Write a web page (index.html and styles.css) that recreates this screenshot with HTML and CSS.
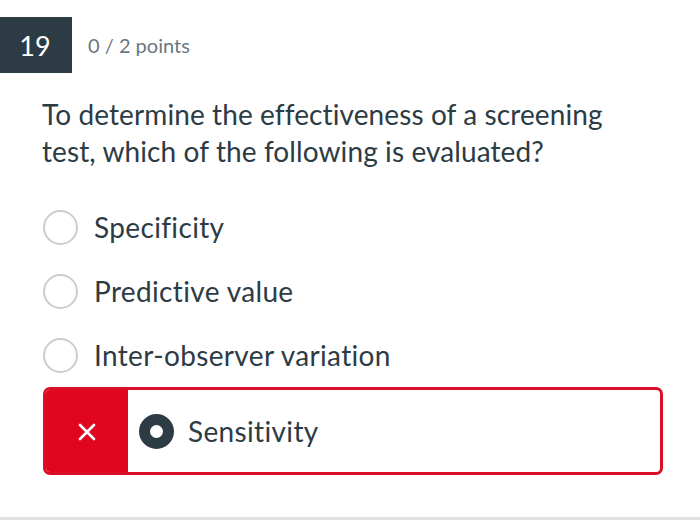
FILE: index.html
```html
<!DOCTYPE html>
<html>
<head>
<meta charset="utf-8">
<link rel="stylesheet" href="styles.css">
</head>
<body>
<div class="page">
  <header class="qhead">
    <div class="qnum">19</div>
    <div class="points">0 / 2 points</div>
  </header>
  <p class="question">To determine the effectiveness of a screening test, which of the following is evaluated?</p>
  <ul class="answers">
    <li class="answer"><span class="radio"></span><span class="label">Specificity</span></li>
    <li class="answer"><span class="radio"></span><span class="label">Predictive value</span></li>
    <li class="answer"><span class="radio"></span><span class="label">Inter-observer variation</span></li>
  </ul>
  <div class="wrong">
    <div class="mark">
      <svg width="20" height="20" viewBox="0 0 20 20"><path d="M3 3 L17 17 M17 3 L3 17" stroke="#fff" stroke-width="2.6" stroke-linecap="round"/></svg>
    </div>
    <div class="picked"><span class="radio selected"></span><span class="label">Sensitivity</span></div>
  </div>
  <div class="rule"></div>
</div>
</body>
</html>
```

FILE: styles.css
```css
html, body { margin: 0; padding: 0; background: #fff; }
body { font-family: Lato, "Open Sans", sans-serif; color: #2d3b45; }
.page { width: 700px; height: 523px; position: relative; overflow: hidden; padding-top: 17px; box-sizing: border-box; }
.qhead { display: flex; align-items: center; height: 56px; }
.qnum { width: 72px; height: 56px; background: #2d3b45; color: #fff; font-size: 27px; display: flex; align-items: center; justify-content: center; box-sizing: border-box; padding-right: 2px; }
.points { margin-left: 16px; font-size: 20px; color: #6b7780; }
.question { margin: 23px 0 0 42px; width: 610px; font-size: 28px; letter-spacing: 0.1px; line-height: 37px; color: #2d3b45; }
.answers { list-style: none; margin: 40px 0 0 43px; padding: 0; }
.answer { display: flex; align-items: center; height: 34px; margin-bottom: 30px; }
.radio { width: 31px; height: 31px; border: 2px solid #c9ced2; border-radius: 50%; flex: none; }
.label { font-size: 28px; letter-spacing: 0.35px; margin-left: 16px; }
.wrong { margin: -15px 0 0 43px; width: 620px; height: 88px; border: 3px solid #d90f27; border-radius: 7px; box-sizing: border-box; display: flex; overflow: hidden; }
.mark { width: 82px; background: #e0061f; display: flex; align-items: center; justify-content: center; }
.mark svg { margin-top: 2px; }
.picked { display: flex; align-items: center; padding-left: 11px; }
.radio.selected { width: 13px; height: 13px; border: 11px solid #2d3b45; }
.picked .label { margin-left: 14px; }
.rule { position: absolute; left: 0; right: 0; top: 517px; height: 3px; background: #dfe1e3; }
```
